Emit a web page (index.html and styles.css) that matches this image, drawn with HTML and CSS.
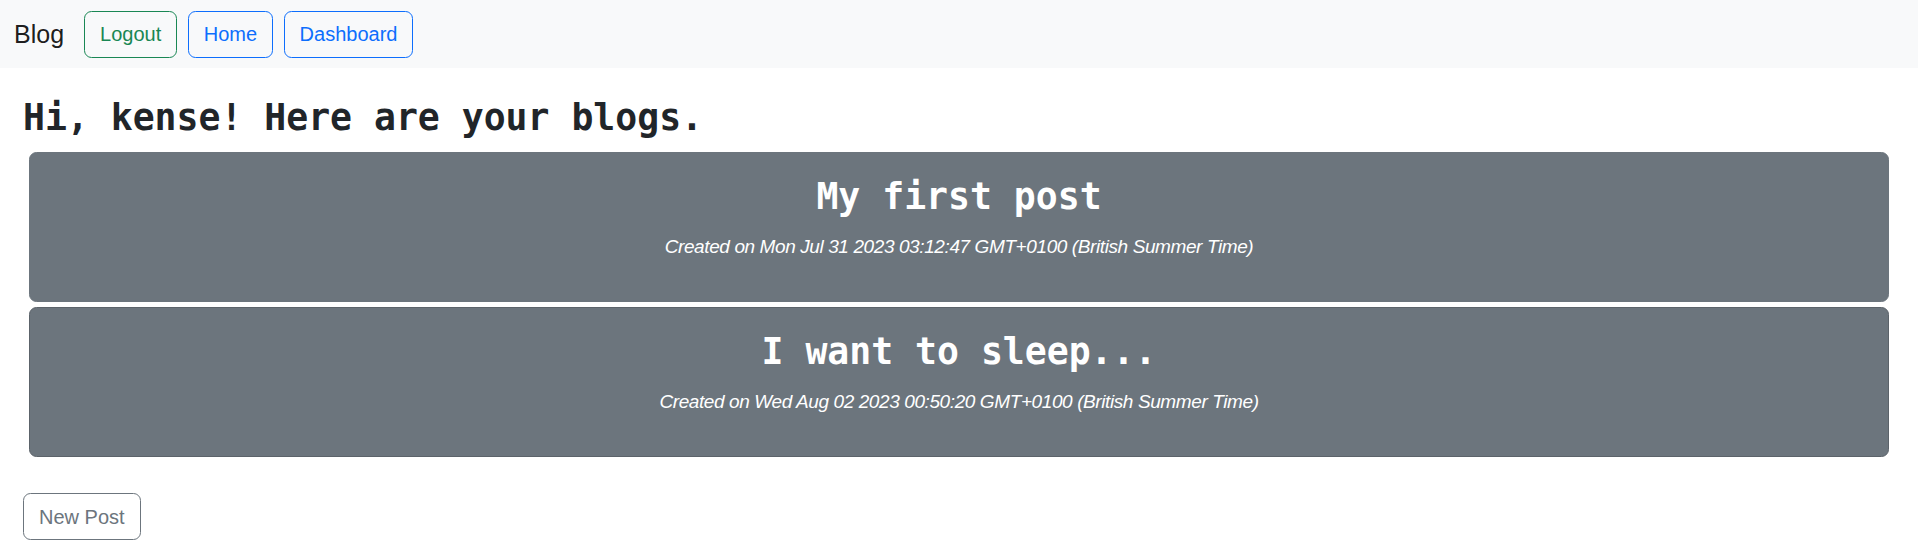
FILE: index.html
```html
<!DOCTYPE html>
<html lang="en">
<head>
<meta charset="utf-8">
<title>Blog</title>
<link rel="stylesheet" href="styles.css">
</head>
<body>
<nav class="navbar">
  <span class="brand">Blog</span>
  <div class="nav-actions">
    <a class="btn btn-success-outline" href="#">Logout</a>
    <a class="btn btn-primary-outline" href="#">Home</a>
    <a class="btn btn-primary-outline" href="#">Dashboard</a>
  </div>
</nav>
<main class="page">
  <h2 class="greeting">Hi, kense! Here are your blogs.</h2>
  <div class="post-list">
    <article class="post-card">
      <h2 class="post-title">My first post</h2>
      <p class="post-date">Created on Mon Jul 31 2023 03:12:47 GMT+0100 (British Summer Time)</p>
    </article>
    <article class="post-card post-card-hover">
      <h2 class="post-title">I want to sleep...</h2>
      <p class="post-date">Created on Wed Aug 02 2023 00:50:20 GMT+0100 (British Summer Time)</p>
    </article>
  </div>
  <div class="actions">
    <a class="btn btn-secondary-outline" href="#">New Post</a>
  </div>
</main>
</body>
</html>
```

FILE: styles.css
```css
* {
  box-sizing: border-box;
}

html, body {
  margin: 0;
  padding: 0;
}

body {
  font-family: "Liberation Sans", Arial, sans-serif;
  font-size: 20px;
  line-height: 1.5;
  color: #212529;
  background: #ffffff;
}

.navbar {
  display: flex;
  align-items: center;
  height: 68px;
  padding: 0 15px 0 14px;
  background: #f8f9fa;
}

.brand {
  font-size: 25px;
  line-height: 37px;
  color: rgba(0, 0, 0, 0.9);
  margin-right: 20px;
}

.nav-actions {
  display: flex;
  gap: 10.5px;
}

.btn {
  display: inline-block;
  font-family: "Liberation Sans", Arial, sans-serif;
  font-size: 20px;
  line-height: 30px;
  padding: 7.5px 15px;
  border: 1px solid transparent;
  border-radius: 7.5px;
  text-decoration: none;
  background: transparent;
}

.btn-success-outline {
  color: #198754;
  border-color: #198754;
}

.btn-primary-outline {
  color: #0d6efd;
  border-color: #0d6efd;
}

.btn-secondary-outline {
  color: #6c757d;
  border-color: #6c757d;
}

.page {
  padding: 0 23px;
}

.greeting {
  margin: 26px 0 10px 0;
  font-family: "DejaVu Sans Mono", "Liberation Mono", monospace;
  font-weight: 700;
  font-size: 36.45px;
  line-height: 48px;
  color: #212529;
}

.post-list {
  display: flex;
  flex-direction: column;
  gap: 5px;
  margin: 0 6px;
}

.post-card {
  background: #6c757d;
  border: 1px solid #6c757d;
  border-radius: 7.5px;
  padding: 20px;
  text-align: center;
  color: #ffffff;
}

.post-card-hover {
  border-color: #5c636a;
}

.post-title {
  margin: 0 0 10px 0;
  font-family: "DejaVu Sans Mono", "Liberation Mono", monospace;
  font-weight: 700;
  font-size: 36.45px;
  line-height: 48px;
}

.post-date {
  margin: 0 0 20px 0;
  font-style: italic;
  font-size: 19px;
  letter-spacing: -0.4px;
  line-height: 30px;
  padding-top: 1px;
  height: 30px;
}

.actions {
  margin-top: 36px;
}
```
